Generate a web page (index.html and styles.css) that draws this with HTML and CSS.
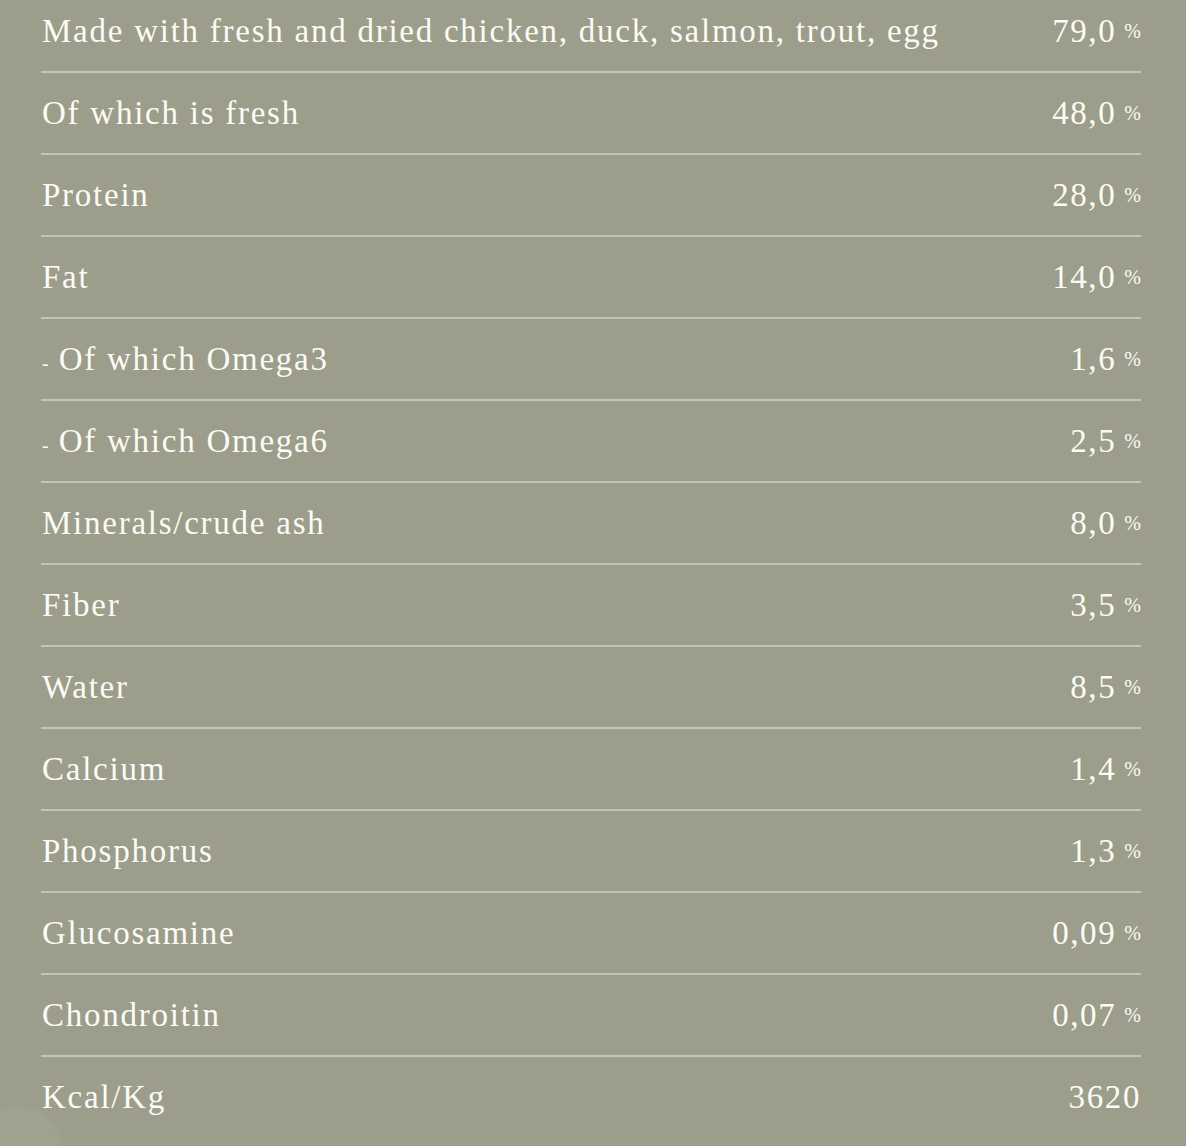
FILE: index.html
```html
<!DOCTYPE html>
<html>
<head>
<meta charset="utf-8">
<link rel="stylesheet" href="styles.css">
</head>
<body>
<div class="page">
  <div class="table">
    <div class="row"><span class="label">Made with fresh and dried chicken, duck, salmon, trout, egg</span><span class="val">79,0<span class="pct">%</span></span></div>
    <div class="row"><span class="label">Of which is fresh</span><span class="val">48,0<span class="pct">%</span></span></div>
    <div class="row"><span class="label">Protein</span><span class="val">28,0<span class="pct">%</span></span></div>
    <div class="row"><span class="label">Fat</span><span class="val">14,0<span class="pct">%</span></span></div>
    <div class="row"><span class="label"><span class="dash">-</span> Of which Omega3</span><span class="val">1,6<span class="pct">%</span></span></div>
    <div class="row"><span class="label"><span class="dash">-</span> Of which Omega6</span><span class="val">2,5<span class="pct">%</span></span></div>
    <div class="row"><span class="label">Minerals/crude ash</span><span class="val">8,0<span class="pct">%</span></span></div>
    <div class="row"><span class="label">Fiber</span><span class="val">3,5<span class="pct">%</span></span></div>
    <div class="row"><span class="label">Water</span><span class="val">8,5<span class="pct">%</span></span></div>
    <div class="row"><span class="label">Calcium</span><span class="val">1,4<span class="pct">%</span></span></div>
    <div class="row"><span class="label">Phosphorus</span><span class="val">1,3<span class="pct">%</span></span></div>
    <div class="row"><span class="label">Glucosamine</span><span class="val">0,09<span class="pct">%</span></span></div>
    <div class="row"><span class="label">Chondroitin</span><span class="val">0,07<span class="pct">%</span></span></div>
    <div class="row last"><span class="label">Kcal/Kg</span><span class="val">3620</span></div>
  </div>
  <div class="blob"></div>
</div>
</body>
</html>
```
FILE: styles.css
```css
html, body {
  margin: 0;
  padding: 0;
  background: #9c9d8a;
  height: 100%;
  overflow: hidden;
}
.page {
  width: 1186px;
  height: 1146px;
  background: #9c9d8a;
  position: relative;
  overflow: hidden;
}
.table {
  margin-top: -9px;
  margin-left: 41px;
  width: 1100px;
  position: relative;
  z-index: 1;
}
.row {
  display: flex;
  justify-content: space-between;
  align-items: baseline;
  height: 56px;
  padding-top: 24px;
  border-bottom: 2px solid #c3c4b6;
  color: #fbfbf6;
  font-family: "Liberation Serif", serif;
  font-size: 33px;
  letter-spacing: 1.75px;
  line-height: 1;
}
.row.last { border-bottom: none; }
.label { padding-left: 1px; }
.dash { font-size: 20px; letter-spacing: 0; }
.val { text-align: right; letter-spacing: 1.6px; }
.pct {
  font-size: 20px;
  margin-left: 8px;
  letter-spacing: 0;
  position: relative;
  top: -4px;
}
.blob {
  position: absolute;
  left: -40px;
  top: 1108px;
  width: 100px;
  height: 80px;
  border-radius: 50% 50% 0 0;
  background: #a0a18e;
  transform: rotate(-20deg);
}
```
